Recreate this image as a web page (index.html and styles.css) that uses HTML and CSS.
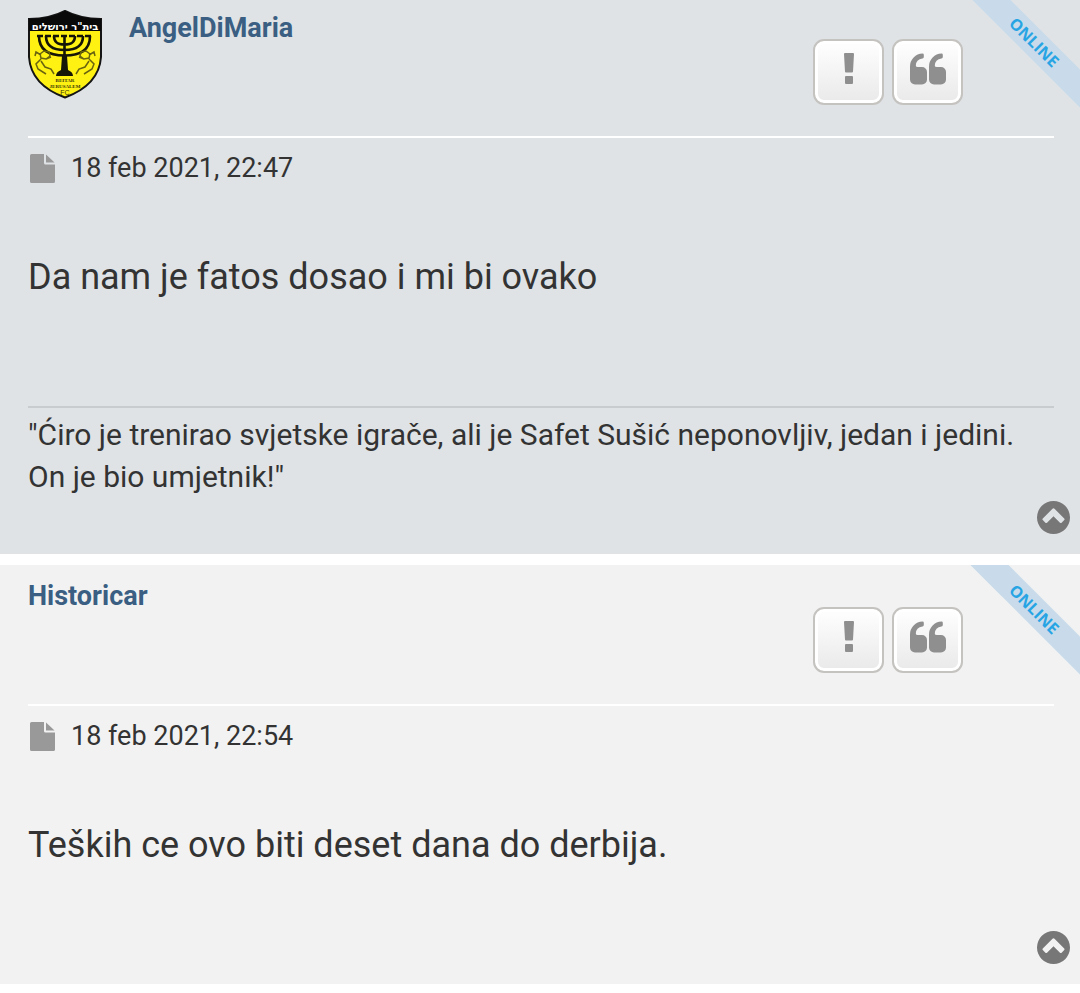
FILE: index.html
```html
<!DOCTYPE html>
<html lang="bs">
<head>
<meta charset="utf-8">
<meta name="viewport" content="width=device-width, initial-scale=1">
<title>Forum</title>
<link rel="stylesheet" href="styles.css">
</head>
<body>
<svg class="symbols" aria-hidden="true">
  <symbol id="exclaim" viewBox="0 0 10 32"><path d="M1 0h8q1 0 1 1L9 18.500q0 1-1 1H2q-1 0-1-1L0 1Q0 0 1 0zM2 23h6q1 0 1 1v6q0 1-1 1H2q-1 0-1-1v-6q0-1 1-1z"/></symbol>
  <symbol id="quote" viewBox="0 0 36 32"><path d="M17 19v7.500a5 5 0 0 1-5 5H5a5 5 0 0 1-5-5V13.500A13 13 0 0 1 12.500.500q1.300 0 1.300 1.200V4q0 1.400-1.300 1.500Q6 6.500 5.800 12.500q0 1.500 2 1.500H12a5 5 0 0 1 5 5z"/><path d="M36 19v7.500a5 5 0 0 1-5 5h-7a5 5 0 0 1-5-5V13.500A13 13 0 0 1 31.500.500q1.300 0 1.300 1.200V4q0 1.400-1.300 1.500-6.500 1-6.700 7 0 1.500 2 1.500H31a5 5 0 0 1 5 5z"/></symbol>
  <symbol id="file" viewBox="0 0 25 29"><path d="M1.500 0H14v9q0 1.500 1.500 1.500H25v17q0 1.500-1.500 1.500h-22Q0 29 0 27.500v-26Q0 0 1.500 0z"/><path d="M16 .500 24.500 8.500H16z"/></symbol>
  <symbol id="up" viewBox="0 0 33 33"><path fill-rule="evenodd" d="M16.500 0a16.500 16.500 0 1 1 0 33 16.500 16.500 0 0 1 0-33zM15.500 7.800 5.800 17.500q-.8.800 0 1.600l2.600 2.600q.8.800 1.600 0l6.500-6.500 6.500 6.500q.8.800 1.600 0l2.600-2.600q.8-.8 0-1.600L17.500 7.800q-1-1-2 0z"/></symbol>
</svg>
<main class="topic">
  <article class="post post-first">
    <div class="ribbon">ONLINE</div>
    <header class="post-header">
      <a class="avatar" href="#" aria-label="AngelDiMaria">
        <svg viewBox="0 0 74 90">
          <path d="M1 9Q22 9 37 1q15 8 36 8v38Q71 75 37 87.500 3 75 1 47z" fill="#fff112" stroke="#151515" stroke-width="2"/>
          <path d="M1 9Q22 9 37 1q15 8 36 8v12H1z" fill="#090909"/>
          <text class="crest-name" x="37" y="20" text-anchor="middle">בית"ר ירושלים</text>
          <g fill="none" stroke="#151508" stroke-width="2.600">
            <path d="M11 26c0 15 11 19.500 25.500 19.500S62 41 62 26M18 26c0 10 7 14 18.500 14S55 36 55 26M26 26c0 6 3 8.500 10.500 8.500S47 32 47 26M36.500 25v35"/>
            <path d="M9 26h56" stroke-dasharray="6 2"/>
          </g>
          <path d="M34 46h5l1 14q5 2 5 6H28q0-4 5-6z" fill="#151508"/>
          <path d="m16 41 5 1 1 4-4 3-5-1-1-4zm-3 8-5 5 2 5 8 5m-5-13 4 6 6 2 3 5m-8-15 5-2m-10-2-5-3-1 4M58 41l-5 1-1 4 4 3 5-1 1-4zm3 8 5 5-2 5-8 5m5-13-4 6-6 2-3 5m8-15-5-2m10-2 5-3 1 4" fill="none" stroke="#6a6410" stroke-width="1.500"/>
          <text class="crest-small" x="37" y="72" text-anchor="middle">BEITAR</text>
          <text class="crest-small" x="37" y="78" text-anchor="middle">JERUSALEM</text>
          <text class="crest-fc" x="37" y="85" text-anchor="middle">FC</text>
        </svg>
      </a>
      <a class="author" href="#">AngelDiMaria</a>
      <div class="actions">
        <button class="action" type="button" aria-label="Report"><svg class="icon-exclaim"><use href="#exclaim"/></svg></button>
        <button class="action" type="button" aria-label="Quote"><svg class="icon-quote"><use href="#quote"/></svg></button>
      </div>
    </header>
    <p class="date"><svg class="icon-file" aria-hidden="true"><use href="#file"/></svg><time datetime="2021-02-18T22:47">18 feb 2021, 22:47</time></p>
    <p class="message">Da nam je fatos dosao i mi bi ovako</p>
    <p class="signature">"Ćiro je trenirao svjetske igrače, ali je Safet Sušić neponovljiv, jedan i jedini. On je bio umjetnik!"</p>
    <a class="top-link" href="#" aria-label="Top"><svg class="icon-up"><use href="#up"/></svg></a>
  </article>
  <article class="post post-alt">
    <div class="ribbon">ONLINE</div>
    <header class="post-header">
      <a class="author" href="#">Historicar</a>
      <div class="actions">
        <button class="action" type="button" aria-label="Report"><svg class="icon-exclaim"><use href="#exclaim"/></svg></button>
        <button class="action" type="button" aria-label="Quote"><svg class="icon-quote"><use href="#quote"/></svg></button>
      </div>
    </header>
    <p class="date"><svg class="icon-file" aria-hidden="true"><use href="#file"/></svg><time datetime="2021-02-18T22:54">18 feb 2021, 22:54</time></p>
    <p class="message">Teških ce ovo biti deset dana do derbija.</p>
    <a class="top-link" href="#" aria-label="Top"><svg class="icon-up"><use href="#up"/></svg></a>
  </article>
</main>
</body>
</html>
```
FILE: styles.css
```css
* { box-sizing: border-box; }
body { margin: 0; background: #fff; color: #333; font-family: Roboto, "Liberation Sans", sans-serif; }
p { margin: 0; }
.symbols { position: absolute; width: 0; height: 0; }
.topic { display: flex; flex-direction: column; gap: 11px; }
.post { position: relative; overflow: hidden; display: flex; flex-direction: column; padding: 10px 26px 20px 28px; background: #dfe3e6; }
.post-alt { padding-top: 13px; background: #f2f2f2; }
.post-header { display: flex; align-items: flex-start; padding-bottom: 31px; border-bottom: 2px solid #fff; }
.avatar { display: block; width: 74px; height: 90px; margin-right: 27px; }
.avatar svg { display: block; width: 100%; height: 100%; }
.crest-name { font: bold 10px "DejaVu Sans", sans-serif; fill: #fff; }
.crest-small { font: bold 5px "Liberation Serif", serif; fill: #39360a; }
.crest-fc { font: 7px "Liberation Sans", sans-serif; fill: #39360a; }
.author { color: #3a5f82; font-size: 27px; line-height: 36px; font-weight: 700; text-decoration: none; }
.actions { display: flex; gap: 8px; margin: 29px 91px 0 auto; }
.action { display: flex; align-items: flex-start; justify-content: center; width: 71px; height: 66px; padding: 12px 0 0; border: 2px solid #c5c3c0; border-radius: 11px; background: linear-gradient(#fff, #e9e9e9); box-shadow: inset 0 0 0 3px #fff; color: #8f8f8f; }
.action svg, .icon-file, .icon-up { display: block; fill: currentColor; }
.icon-exclaim { width: 10px; height: 32px; }
.icon-quote { width: 36px; height: 32px; }
.date { display: flex; align-items: center; gap: 16px; margin-top: 11px; padding-left: 2px; font-size: 27px; line-height: 38px; }
.icon-file { width: 25px; height: 29px; color: #999; }
.message { margin-top: 65px; font-size: 36px; line-height: 50px; }
.signature { margin-top: 104px; padding-top: 6px; border-top: 2px solid #c8ccce; font-size: 30px; line-height: 42px; }
.top-link { display: block; align-self: flex-end; margin-right: -16px; color: #777; }
.icon-up { width: 33px; height: 33px; }
.signature + .top-link { margin-top: 3px; }
.message + .top-link { margin-top: 61px; }
.ribbon { position: absolute; top: 32px; right: -35px; width: 160px; height: 27px; padding-right: 3px; transform: rotate(45deg); background: #c9dbea; color: #27a4e4; font-family: "Open Sans", sans-serif; font-size: 16px; line-height: 27px; font-weight: 700; text-align: center; }
.post-first .ribbon { top: 30px; }
```
